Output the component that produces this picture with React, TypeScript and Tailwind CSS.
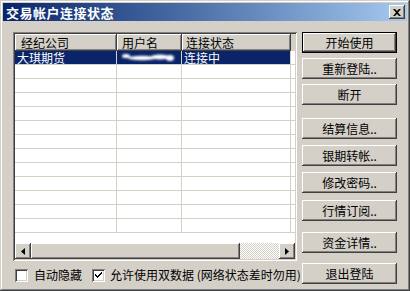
import React from "react";

const raised =
  "shadow-[inset_-1px_-1px_#404040,inset_1px_1px_#ffffff,inset_-2px_-2px_#808080,inset_2px_2px_#d4d0c8]";

function Btn({ label, className = "", isDefault = false }: { label: string; className?: string; isDefault?: boolean }) {
  if (isDefault) {
    return (
      <div className={`h-[21px] w-[95px] border border-black ${className}`}>
        <div className={`flex h-full w-full items-center justify-center bg-[#d4d0c8] ${raised}`}>{label}</div>
      </div>
    );
  }
  return (
    <div className={`flex h-[21px] w-[95px] items-center justify-center bg-[#d4d0c8] ${raised} ${className}`}>
      {label}
    </div>
  );
}

function Checkbox({ checked }: { checked: boolean }) {
  return (
    <div className="relative h-[13px] w-[13px] shrink-0 bg-white shadow-[inset_1px_1px_#808080,inset_-1px_-1px_#ffffff,inset_2px_2px_#404040,inset_-2px_-2px_#d4d0c8]">
      {checked && (
        <svg className="absolute left-[3px] top-[3px]" width="7" height="7" viewBox="0 0 7 7">
          <path d="M0 2h1v1h1v1h1V3h1V2h1V1h1V0h1v2H6v1H5v1H4v1H3v1H2V5H1V4H0z" fill="#000" />
        </svg>
      )}
    </div>
  );
}

const rows = Array.from({ length: 13 });

export default function App() {
  return (
    <div
      className="relative h-[291px] w-[410px] bg-[#d4d0c8] text-[12px] leading-none text-black shadow-[inset_-1px_-1px_#404040,inset_1px_1px_#d4d0c8,inset_-2px_-2px_#808080,inset_2px_2px_#ffffff]"
      style={{ fontFamily: '"Noto Sans CJK SC", "Noto Sans", sans-serif' }}
    >
      <div className="absolute left-0 top-0 h-full w-full p-[3px]">
        {/* Title bar */}
        <div className="flex h-[18px] items-center justify-between bg-gradient-to-r from-[#0a246a] to-[#a6caf0] pl-[3px] pr-[2px]">
          <span className="text-[13px] font-bold tracking-[0.5px] text-white">交易帐户连接状态</span>
          <div className={`flex h-[14px] w-[16px] items-center justify-center bg-[#d4d0c8] ${raised}`}>
            <svg width="8" height="7" viewBox="0 0 8 7">
              <path d="M0 0h2l2 2 2-2h2L5 3.5 8 7H6L4 5 2 7H0l3-3.5z" fill="#000" />
            </svg>
          </div>
        </div>

        {/* Body */}
        <div className="flex gap-[5px] pl-[10px] pt-[11px]">
          {/* Left column */}
          <div className="flex w-[284px] flex-col">
            <div className="flex h-[229px] flex-col bg-white p-[2px] shadow-[inset_1px_1px_#808080,inset_-1px_-1px_#ffffff,inset_2px_2px_#404040,inset_-2px_-2px_#d4d0c8]">
              {/* header */}
              <div className="flex h-[17px] shrink-0 items-center bg-[#d4d0c8]">
                <div className={`flex h-full w-[102px] items-center pl-[6px] ${raised}`}>经纪公司</div>
                <div className={`flex h-full w-[65px] items-center pl-[5px] ${raised}`}>用户名</div>
                <div className={`flex h-full w-[109px] items-center pl-[4px] ${raised}`}>连接状态</div>
                <div className="flex-1" />
              </div>
              {/* rows */}
              <div className="flex-1">
                {rows.map((_, i) => (
                  <div key={i} className="flex h-[14px] border-b border-[#d4d0c8]">
                    <div className={`flex w-[102px] items-center border-r border-[#d4d0c8] pl-[2px] ${i === 0 ? "bg-[#0a246a] text-white" : ""}`}>
                      {i === 0 ? "大琪期货" : ""}
                    </div>
                    <div className={`relative w-[65px] border-r border-[#d4d0c8] ${i === 0 ? "bg-[#0a246a]" : ""}`}>
                      {i === 0 && (
                        <svg className="absolute left-[3px] top-[1px]" width="56" height="11" viewBox="0 0 56 11">
                          <defs>
                            <filter id="b" x="-20%" y="-50%" width="140%" height="200%">
                              <feGaussianBlur stdDeviation="0.8" />
                            </filter>
                          </defs>
                          <g fill="#fff" filter="url(#b)">
                            <ellipse cx="6" cy="4" rx="4" ry="2" />
                            <ellipse cx="22" cy="6" rx="14" ry="2.2" />
                            <ellipse cx="40" cy="5" rx="9" ry="2.6" />
                            <ellipse cx="50" cy="6" rx="4" ry="3" />
                          </g>
                        </svg>
                      )}
                    </div>
                    <div className={`flex w-[109px] items-center border-r border-[#d4d0c8] pl-[2px] ${i === 0 ? "bg-[#0a246a] text-white" : ""}`}>
                      {i === 0 ? "连接中" : ""}
                    </div>
                    <div className="flex-1" />
                  </div>
                ))}
              </div>
              {/* horizontal scrollbar */}
              <div className="flex h-[16px] shrink-0 bg-[#d4d0c8]">
                <div className={`flex w-[16px] items-center justify-center bg-[#d4d0c8] ${raised}`}>
                  <svg width="4" height="7" viewBox="0 0 4 7">
                    <path d="M4 0v7L0 3.5z" fill="#000" />
                  </svg>
                </div>
                <div className={`w-[209px] bg-[#d4d0c8] ${raised}`} />
                <div className="flex-1 bg-[repeating-conic-gradient(#d4d0c8_0_25%,#ffffff_0_50%)] bg-[length:2px_2px]" />
                <div className={`flex w-[16px] items-center justify-center bg-[#d4d0c8] ${raised}`}>
                  <svg width="4" height="7" viewBox="0 0 4 7">
                    <path d="M0 0v7L4 3.5z" fill="#000" />
                  </svg>
                </div>
              </div>
            </div>
            {/* checkboxes */}
            <div className="mt-[7px] flex h-[14px] items-center whitespace-nowrap">
              <div className="ml-[2px]">
                <Checkbox checked={false} />
              </div>
              <span className="ml-[6px] shrink-0">自动隐藏</span>
              <div className="ml-[10px]">
                <Checkbox checked={true} />
              </div>
              <span className="ml-[5px] shrink-0">允许使用双数据 (网络状态差时勿用)</span>
            </div>
          </div>

          {/* Right column */}
          <div className="flex flex-col">
            <Btn label="开始使用" isDefault />
            <Btn label="重新登陆.." className="mt-[5px]" />
            <Btn label="断开" className="mt-[5px]" />
            <Btn label="结算信息.." className="mt-[13px]" />
            <Btn label="银期转帐.." className="mt-[6px]" />
            <Btn label="修改密码.." className="mt-[6px]" />
            <Btn label="行情订阅.." className="mt-[7px]" />
            <Btn label="资金详情.." className="mt-[11px]" />
            <Btn label="退出登陆" className="mt-[10px]" />
          </div>
        </div>
      </div>
    </div>
  );
}
